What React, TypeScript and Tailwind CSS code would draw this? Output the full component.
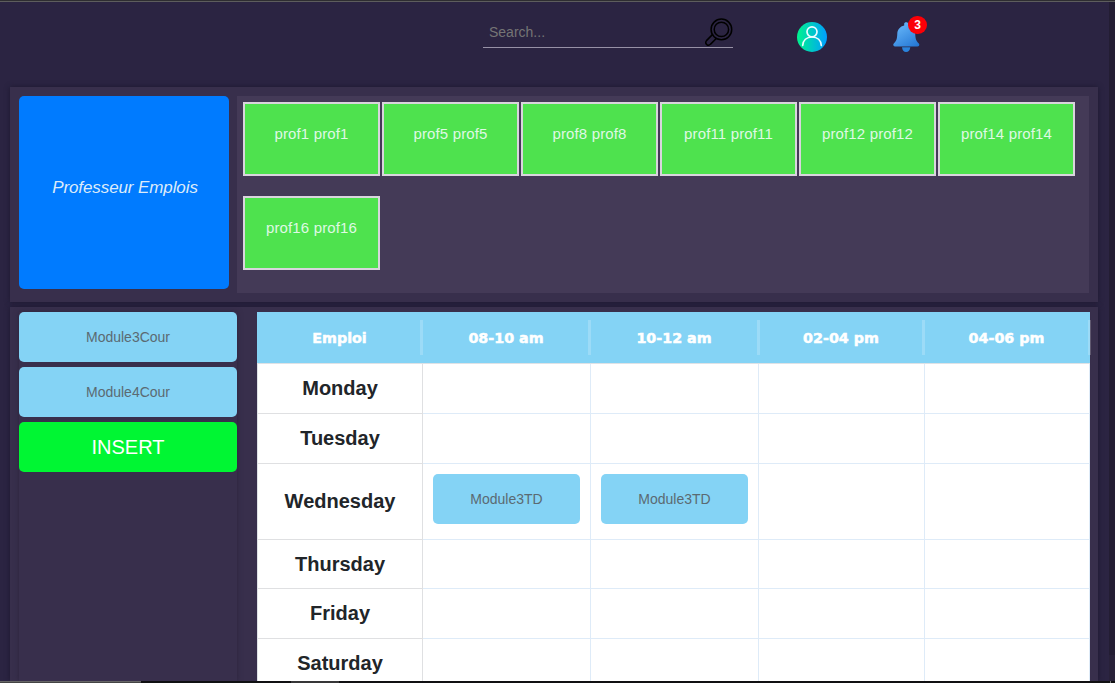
const professors = [
  "prof1 prof1",
  "prof5 prof5",
  "prof8 prof8",
  "prof11 prof11",
  "prof12 prof12",
  "prof14 prof14",
  "prof16 prof16",
];

const slots = [
  { label: "08-10 am", sep: "right-0" },
  { label: "10-12 am", sep: "-right-px" },
  { label: "02-04 pm", sep: "right-0" },
  { label: "04-06 pm", sep: "-right-px" },
];

const days = [
  { name: "Monday", height: "h-[50px]", pad: "pb-0.5", modules: ["", "", "", ""] },
  { name: "Tuesday", height: "h-[50px]", pad: "pb-0.5", modules: ["", "", "", ""] },
  { name: "Wednesday", height: "h-[76px]", pad: "pb-0.5", modules: ["Module3TD", "Module3TD", "", ""] },
  { name: "Thursday", height: "h-[49px]", pad: "pb-0", modules: ["", "", "", ""] },
  { name: "Friday", height: "h-[50px]", pad: "pb-0.5", modules: ["", "", "", ""] },
  { name: "Saturday", height: "h-[50px]", pad: "pb-0.5", modules: ["", "", "", ""] },
];

const columns = "grid grid-cols-[165px_168px_168px_166px_165px]";

function SearchIcon() {
  return (
    <svg className="mt-0.5" width="28" height="29" viewBox="0 0 28 29" fill="none" stroke="#000" strokeWidth="1.5">
      <circle cx="16.4" cy="11.4" r="10.3" />
      <circle cx="16.4" cy="11.4" r="7.2" />
      <path d="M7.4 16.6 L1.5 22.6 C0.4 24.1 0.6 25.6 1.8 26.6 C3.1 27.6 4.6 27.2 5.6 26.1 L11.5 20.3" />
    </svg>
  );
}

function UserIcon() {
  return (
    <svg width="30" height="30" viewBox="0 0 30 30" fill="none">
      <defs>
        <linearGradient id="user-fill" x1="0" y1="15" x2="30" y2="15" gradientUnits="userSpaceOnUse">
          <stop stopColor="#00f38d" />
          <stop offset="1" stopColor="#009eff" />
        </linearGradient>
      </defs>
      <circle cx="15" cy="15" r="15" fill="url(#user-fill)" />
      <circle cx="15" cy="9.8" r="5" stroke="#e9fcff" strokeWidth="1.7" />
      <path d="M5.7 23.5 C6 18.5 9.5 15 15 15 S24 18.5 24.3 23.5" stroke="#e9fcff" strokeWidth="1.7" strokeLinecap="round" />
    </svg>
  );
}

function BellIcon() {
  return (
    <svg width="27" height="31" viewBox="0 0 27 31">
      <defs>
        <linearGradient id="bell-fill" x1="6" y1="3" x2="21" y2="27" gradientUnits="userSpaceOnUse">
          <stop stopColor="#63b3f7" />
          <stop offset="1" stopColor="#2376d4" />
        </linearGradient>
      </defs>
      <path d="M9 25.2 H17.3 C17 28.3 15.5 30 13.1 30 S9.3 28.3 9 25.2Z" fill="#2a83dc" />
      <path
        d="M11.2 3.5 V1.7 C11.2 -0.3 15.3 -0.3 15.3 1.7 V3.5 C19.5 4.5 22 7.5 22.2 11.5 C22.4 16.5 23 19 25.8 21.4 C26.8 22.6 26.4 24.4 24.5 24.4 H2 C0.1 24.4 -0.2 22.6 0.8 21.4 C3.6 19 4.1 16.5 4.3 11.5 C4.5 7.5 7 4.5 11.2 3.5Z"
        fill="url(#bell-fill)"
      />
    </svg>
  );
}

function ModuleCard({ label }: { label: string }) {
  return (
    <div className="flex h-[50px] w-full items-center justify-center rounded-[5px] bg-[#84d3f5] text-sm text-[#5b6a72]">
      {label}
    </div>
  );
}

export default function App() {
  return (
    <div className="flex h-[683px] w-[1115px] flex-col overflow-hidden bg-[#2b2442] font-['Liberation_Sans',Arial,sans-serif]">
      <div className="h-0.5 shrink-0 border-b border-[#5d5d5d] bg-[#2e2d31]" />
      <div className="flex min-h-0 grow">
        <div className="flex min-w-0 grow flex-col pl-2.5">
          <header className="flex h-[85px] shrink-0 items-start pl-[473px]">
            <div className="mt-3.5 flex h-8 w-[250px] justify-between border-b border-[#9791a6] pl-1.5">
              <span className="mt-1.5 text-sm leading-5 text-[#757575]">Search...</span>
              <SearchIcon />
            </div>
            <div className="mt-5 ml-16">
              <UserIcon />
            </div>
            <div className="relative mt-5 ml-[66px]">
              <BellIcon />
              <span className="absolute -top-1.5 left-[15px] flex h-[18px] w-[19px] items-center justify-center rounded-full bg-[#fb0007] text-xs font-bold text-white">
                3
              </span>
            </div>
          </header>

          <section className="flex h-[215px] w-[1088px] shrink-0 gap-2 bg-[#382f4c] pt-[9px] pl-[9px] shadow-[0_0_5px_#1d1830]">
            <div className="flex h-[193px] w-[210px] items-center justify-center rounded-[5px] bg-[#007bff] pb-2.5 pl-0.5 text-[17px] tracking-[-0.1px] text-[#dcebfa] italic">
              Professeur Emplois
            </div>
            <div className="grid h-[197px] w-[852px] auto-rows-[74px] grid-cols-[repeat(6,137px)] gap-x-0.5 gap-y-5 bg-[#443a57] pt-1.5 pl-1.5">
              {professors.map((p) => (
                <div
                  key={p}
                  className="flex items-start justify-center border-2 border-[#d9d5dd] bg-[#4ee24e] pt-[18px] text-[15px] leading-6 tracking-[0.15px] text-[#dff9e4]"
                >
                  {p}
                </div>
              ))}
            </div>
          </section>

          <section className="mt-[5px] flex min-h-0 w-[1088px] grow gap-5 bg-[#382f4c] pt-[5px] pl-[9px] shadow-[0_0_5px_#1d1830]">
            <div className="flex w-[218px] flex-col gap-[5px] shadow-[0_0_5px_#2a233b]">
              <ModuleCard label="Module3Cour" />
              <ModuleCard label="Module4Cour" />
              <button className="h-[50px] rounded-[5px] bg-[#00f633] text-xl text-white">INSERT</button>
            </div>
            <div className="w-[833px]">
              <div
                className={`${columns} h-[51px] bg-[#84d3f5] font-['DejaVu_Sans',sans-serif] text-[14.3px] font-bold text-white [-webkit-text-stroke:0.5px_white]`}
              >
                <div className="relative flex items-center justify-center pt-0.5">
                  Emploi
                  <span className="absolute top-2 -right-px h-[35px] w-[3px] bg-white/20" />
                </div>
                {slots.map((s) => (
                  <div key={s.label} className="relative flex items-center justify-center pt-0.5">
                    {s.label}
                    <span
                      className={`absolute top-2 h-[35px] w-[3px] bg-white/20 ${s.sep === "right-0" ? "-right-px" : "-right-0.5"}`}
                    />
                  </div>
                ))}
              </div>
              <div className="border-t border-l border-[#dee2e6] bg-white">
                {days.map((d) => (
                  <div key={d.name} className={`${columns} ${d.height}`}>
                    <div
                      className={`flex items-center justify-center border-r border-b border-[#dfe0e2] text-xl font-bold text-[#212529] ${d.pad}`}
                    >
                      {d.name}
                    </div>
                    {d.modules.map((m, i) => (
                      <div key={i} className="border-r border-b border-[#deebf8] px-2.5 pt-2.5">
                        {m && <ModuleCard label={m} />}
                      </div>
                    ))}
                  </div>
                ))}
              </div>
            </div>
          </section>
        </div>
        <div className="w-1.5 shrink-0 bg-[#282139]">
          <div className="h-[653px] bg-[#231d33]" />
        </div>
      </div>
      <div className="flex h-0.5 shrink-0 bg-[#101012]">
        <div className="w-[141px] border-t border-[#666] bg-[#444]" />
        <div className="ml-[150px] w-12 bg-[#363638]" />
        <div className="ml-[771px] w-px bg-[#777]" />
      </div>
    </div>
  );
}
